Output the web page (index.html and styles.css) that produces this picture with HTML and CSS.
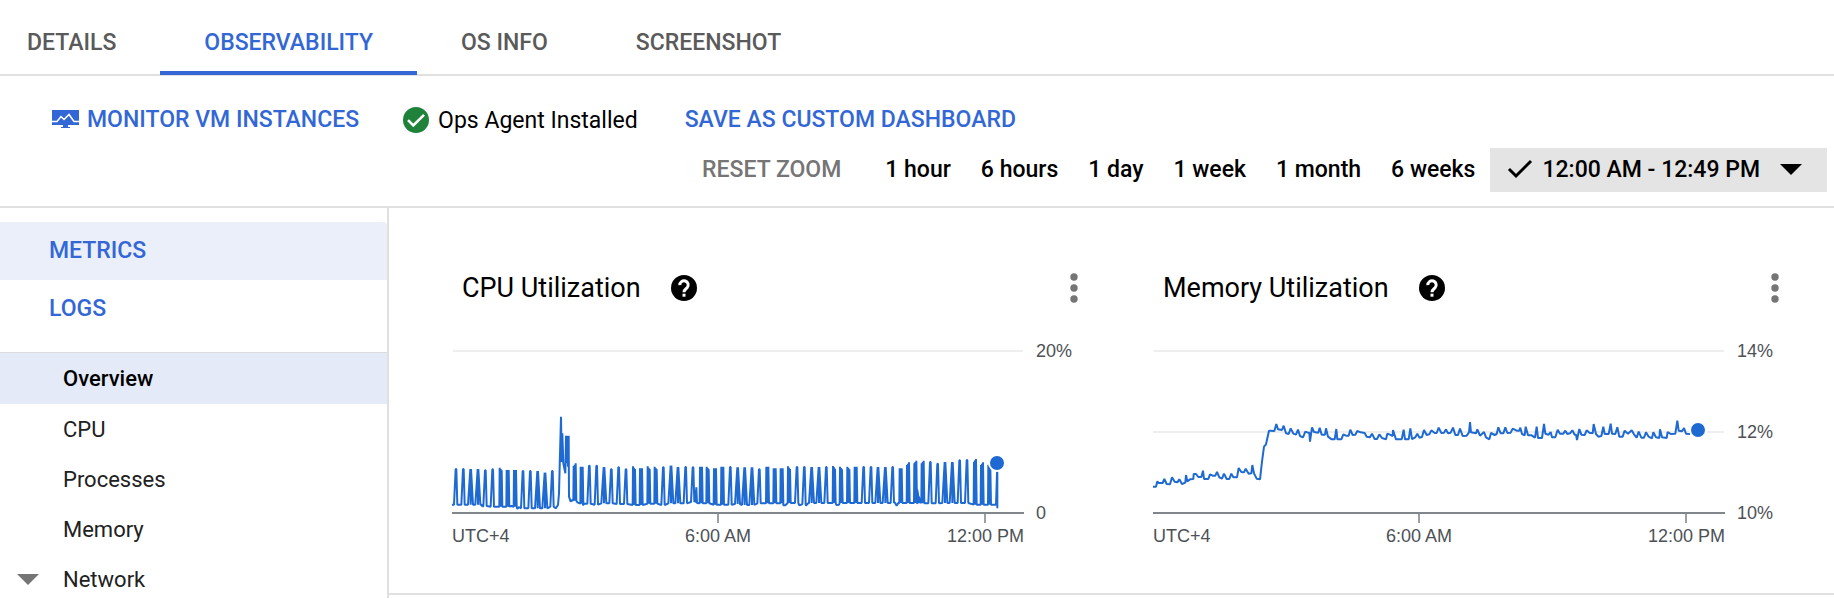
FILE: index.html
```html
<!DOCTYPE html>
<html lang="en">
<head>
<meta charset="utf-8">
<title>VM instance observability</title>
<link rel="stylesheet" href="styles.css">
</head>
<body>
<nav class="tabs">
  <a class="tab" href="#details">DETAILS</a>
  <a class="tab tab-active" href="#observability" aria-current="page">OBSERVABILITY</a>
  <a class="tab" href="#os-info">OS INFO</a>
  <a class="tab" href="#screenshot">SCREENSHOT</a>
</nav>

<header class="toolbar">
  <div class="actions">
    <a class="action" href="#monitor">
      <svg class="icon-monitor" viewBox="0 0 27 18" aria-hidden="true">
        <path fill="#3367d6" d="M0 0h27v15H16v2h2v1H9v-1h2v-2H0z"/>
        <path fill="none" stroke="#fff" stroke-width="1.5" d="M0 11.5h5l4-5 3 3 5-5 5 7h5"/>
      </svg>
      MONITOR VM INSTANCES
    </a>
    <span class="agent">
      <svg class="icon-ok" viewBox="0 0 26 26" aria-hidden="true">
        <circle cx="13" cy="13" r="13" fill="#1e823b"/>
        <path fill="none" stroke="#fff" stroke-width="2.6" d="M5 13.2l5.3 5.3L21 7.8"/>
      </svg>
      Ops Agent Installed
    </span>
    <a class="action save" href="#save">SAVE AS CUSTOM DASHBOARD</a>
  </div>
  <div class="ranges">
    <button class="range reset" type="button" disabled>RESET ZOOM</button>
    <button class="range" type="button">1 hour</button>
    <button class="range" type="button">6 hours</button>
    <button class="range" type="button">1 day</button>
    <button class="range" type="button">1 week</button>
    <button class="range" type="button">1 month</button>
    <button class="range" type="button">6 weeks</button>
    <button class="range range-active" type="button">
      <svg class="icon-check" viewBox="0 0 26 20" aria-hidden="true"><path fill="none" stroke="#000" stroke-width="3" d="M2 10l7 7L24 2"/></svg>
      12:00 AM - 12:49 PM
      <svg class="icon-caret" viewBox="0 0 22 11" aria-hidden="true"><path d="M0 0h22L11 11z"/></svg>
    </button>
  </div>
</header>

<div class="body">
  <aside class="sidebar">
    <nav class="sections">
      <a class="section section-active" href="#metrics">METRICS</a>
      <a class="section" href="#logs">LOGS</a>
    </nav>
    <nav class="tree">
      <a class="item item-active" href="#overview">Overview</a>
      <a class="item" href="#cpu">CPU</a>
      <a class="item" href="#processes">Processes</a>
      <a class="item" href="#memory">Memory</a>
      <a class="item" href="#network"><svg class="item-caret" viewBox="0 0 22 11" aria-hidden="true"><path fill="#757575" d="M0 0h22L11 11z"/></svg>Network</a>
    </nav>
  </aside>

  <main class="main">
    <div class="charts">
      <section class="card">
        <div class="card-head">
          <h2 class="card-title">CPU Utilization</h2>
          <button class="icon-button" type="button" aria-label="Help">
            <svg class="icon-help" viewBox="0 0 26 26" aria-hidden="true"><circle cx="13" cy="13" r="13"/><path fill="none" stroke="#fff" stroke-width="3" d="M8.8 10.2a4.2 4.2 0 1 1 7.3 2.6c-1.4 1.4-3.1 2-3.1 4.4"/><rect x="11.5" y="18.7" width="3" height="3" fill="#fff"/></svg>
          </button>
          <button class="icon-button more" type="button" aria-label="More options">
            <svg class="icon-more" viewBox="0 0 8 30" aria-hidden="true"><g fill="#757575"><circle cx="4" cy="4" r="3.7"/><circle cx="4" cy="15" r="3.7"/><circle cx="4" cy="26" r="3.7"/></g></svg>
          </button>
        </div>
        <svg class="chart" viewBox="0 0 624 216" role="img" aria-label="CPU utilization over time">
          <path class="grid" d="M1 15H571"/>
          <path class="axis" d="M0 177H572"/>
          <path class="tick" d="M266 178V187M533 178V187"/>
          <path class="line" id="cpu-line"/>
          <circle class="dot" cx="545" cy="127" r="8"/>
          <text class="label" x="584" y="21">20%</text>
          <text class="label" x="584" y="183">0</text>
          <text class="label" x="0" y="206">UTC+4</text>
          <text class="label label-mid" x="266" y="206">6:00 AM</text>
          <text class="label label-end" x="572" y="206">12:00 PM</text>
        </svg>
      </section>

      <section class="card">
        <div class="card-head">
          <h2 class="card-title">Memory Utilization</h2>
          <button class="icon-button" type="button" aria-label="Help">
            <svg class="icon-help" viewBox="0 0 26 26" aria-hidden="true"><circle cx="13" cy="13" r="13"/><path fill="none" stroke="#fff" stroke-width="3" d="M8.8 10.2a4.2 4.2 0 1 1 7.3 2.6c-1.4 1.4-3.1 2-3.1 4.4"/><rect x="11.5" y="18.7" width="3" height="3" fill="#fff"/></svg>
          </button>
          <button class="icon-button more" type="button" aria-label="More options">
            <svg class="icon-more" viewBox="0 0 8 30" aria-hidden="true"><g fill="#757575"><circle cx="4" cy="4" r="3.7"/><circle cx="4" cy="15" r="3.7"/><circle cx="4" cy="26" r="3.7"/></g></svg>
          </button>
        </div>
        <svg class="chart" viewBox="0 0 624 216" role="img" aria-label="Memory utilization over time">
          <path class="grid" d="M1 15H571M0 96H571"/>
          <path class="axis" d="M0 177H572"/>
          <path class="tick" d="M266 178V187M533 178V187"/>
          <path class="line" id="memory-line"/>
          <circle class="dot" cx="545" cy="94" r="8"/>
          <text class="label" x="584" y="21">14%</text>
          <text class="label" x="584" y="102">12%</text>
          <text class="label" x="584" y="183">10%</text>
          <text class="label" x="0" y="206">UTC+4</text>
          <text class="label label-mid" x="266" y="206">6:00 AM</text>
          <text class="label label-end" x="572" y="206">12:00 PM</text>
        </svg>
      </section>
    </div>
  </main>
</div>
<script src="charts.js"></script>
</body>
</html>
```

FILE: styles.css
```css
* {
  box-sizing: border-box;
}

body {
  margin: 0;
  background: #fff;
  color: #000;
  font-family: Roboto, "Liberation Sans", sans-serif;
  font-size: 23px;
  overflow: hidden;
}

a {
  color: inherit;
  text-decoration: none;
}

button {
  margin: 0;
  padding: 0;
  border: 0;
  background: none;
  color: inherit;
  font: inherit;
}

svg {
  display: block;
  flex: none;
}

.tabs {
  display: flex;
  height: 76px;
  margin-left: -17px;
  border-bottom: 2px solid #e0e0e0;
  color: #5a5a5a;
  font-weight: 500;
}

.tab {
  height: 75px;
  padding: 9px 44px 0;
  border-bottom: 4px solid transparent;
  line-height: 68px;
}

.tab-active {
  border-color: #3367d6;
  color: #3367d6;
}

.toolbar {
  padding: 22px 7px 14px 52px;
  border-bottom: 2px solid #e0e0e0;
}

.actions {
  display: flex;
  align-items: center;
  height: 44px;
  margin-bottom: 6px;
}

.action {
  display: flex;
  align-items: center;
  gap: 8px;
  padding-bottom: 2px;
  color: #3367d6;
  font-weight: 500;
}

.agent {
  display: flex;
  align-items: center;
  gap: 9px;
  margin: 0 47px 0 44px;
}

.icon-monitor {
  width: 27px;
  height: 18px;
}

.icon-ok,
.icon-help {
  width: 26px;
  height: 26px;
}

.ranges {
  display: flex;
  justify-content: flex-end;
}

.range {
  height: 44px;
  padding: 0 15px 2px;
  font-weight: 500;
  white-space: nowrap;
}

.reset {
  margin-right: 14px;
  color: #757575;
}

.range-active {
  display: flex;
  align-items: center;
  gap: 9px;
  padding: 0 25px 2px 17px;
  background: #e4e4e4;
}

.icon-check {
  width: 26px;
  height: 20px;
}

.icon-caret {
  width: 22px;
  height: 11px;
  margin-left: 11px;
}

.body {
  display: flex;
}

.sidebar {
  flex: none;
  width: 389px;
  padding-top: 14px;
  border-right: 2px solid #e0e0e0;
}

.section {
  display: block;
  padding-left: 49px;
  color: #3367d6;
  font-weight: 500;
  line-height: 58px;
}

.section-active {
  border-top-right-radius: 4px;
  background: #ebeffa;
}

.tree {
  margin-top: 14px;
  border-top: 1px solid #dcdcdc;
  color: #212121;
  font-size: 22px;
}

.item {
  display: flex;
  align-items: center;
  height: 50px;
  padding-left: 63px;
}

.item-active {
  height: 51px;
  background: #e5eaf9;
  color: #000;
  font-weight: 500;
}

.item-caret {
  width: 22px;
  height: 11px;
  margin: 0 24px 0 -46px;
}

.main {
  flex: 1;
}

.charts {
  display: grid;
  grid-template-columns: 1fr 1fr;
  gap: 77px;
  padding: 60px 57px 41px 63px;
  border-bottom: 2px solid #e0e0e0;
}

.card-head {
  display: flex;
  align-items: center;
  height: 40px;
  margin: 0 -2px 28px 0;
  padding-left: 10px;
}

.card-title {
  margin: 0;
  font-size: 27px;
  font-weight: 400;
}

.icon-button {
  margin-left: 30px;
}

.more {
  margin-left: auto;
}

.icon-more {
  width: 8px;
  height: 30px;
}

.chart {
  width: 100%;
  overflow: visible;
}

.grid,
.axis,
.tick,
.line {
  fill: none;
  stroke-width: 2;
}

.grid {
  stroke: #eeeeee;
}

.axis {
  stroke: #80868b;
}

.tick {
  stroke: #9aa0a6;
}

.line {
  stroke: #1f6ad2;
  stroke-linejoin: bevel;
}

.dot {
  fill: #1f6ad2;
  stroke: #fff;
  stroke-width: 2;
}

.label {
  fill: #4d5156;
  font-family: "Liberation Sans", Arial, sans-serif;
  font-size: 18px;
}

.label-mid {
  text-anchor: middle;
}

.label-end {
  text-anchor: end;
}
```

FILE: charts.js
```js
// Samples are stored at three units per chart pixel.
function toPath(points, left) {
  return points.map(function (p, i) {
    var x = (p[0] - left) / 3;
    var y = p[1] / 3 - 76;
    return (i ? 'L' : 'M') + x.toFixed(2) + ' ' + y.toFixed(2);
  }).join('');
}

// Each burst is "x,top,kind": n narrow, w wide, b block, s falling block, r rising block.
function bursts(text, base) {
  var out = [];
  text.split(' ').forEach(function (item) {
    var f = item.split(',');
    var x = +f[0];
    var top = +f[1] + 1;
    if (f[2] === 'n') {
      out.push([x - 6, base], [x - 1, top], [x + 1, top], [x + 4, base]);
    } else if (f[2] === 'w') {
      out.push([x - 8, base], [x - 1, top], [x, base], [x + 1, top], [x + 7, base]);
    } else {
      var a = f[2] === 'r' ? 9 : 1;
      var b = f[2] === 's' ? 9 : 1;
      out.push([x - 4, base], [x - 3, top + a], [x, base], [x, top + (a + b) / 2], [x + 3, base], [x + 3, top + b], [x + 5, base]);
    }
  });
  return out;
}

function pairs(text, shift) {
  return text.split(' ').map(function (item) {
    var f = item.split(',');
    return [+f[0] + shift, +f[1]];
  });
}

var cpu = [[36, 734]].concat(
  bursts('48,626,n 70,626,n 92,626,w 114,626,w', 734),
  pairs('124,734 128,740', 0),
  bursts('136,630,n', 738),
  bursts('158,627,n 182,621,s 203,628,b', 740),
  pairs('214,738', 0),
  bursts('225,628,b', 740),
  pairs('232,747 236,741', 0),
  bursts('249,632,n 271,632,n 293,632,w', 745),
  bursts('315,637,w', 745),
  bursts('337,632,n', 740),
  pairs('347,745 354,735 357,700 359,620 363,470 365,605 368,600 367,520 370,610 376,640 378,527 381,610 382,527 384,620 386,527 387,710 392,725 397,720', 0),
  bursts('404,608,r', 722),
  pairs('412,727', 0),
  bursts('425,618,b', 731),
  pairs('428,736 433,731', 0),
  bursts('448,616,n', 731),
  bursts('470,616,n', 734),
  bursts('492,620,w 514,627,n', 730),
  bursts('536,621,n 558,627,n', 732),
  bursts('582,617,s 603,623,b', 735),
  bursts('626,617,s 647,618,s', 731),
  bursts('670,621,n', 735),
  bursts('693,616,w 714,620,w 737,620,n', 730),
  bursts('759,621,n', 726),
  pairs('765,690 767,728 769,682 771,729', 0),
  bursts('783,618,b 803,618,s', 730),
  bursts('825,623,b 847,618,b 871,620,n', 734),
  bursts('893,621,w', 732),
  bursts('914,621,w 936,621,w', 735),
  bursts('958,627,n 982,618,b 1004,623,b 1025,623,b', 730),
  pairs('1030,736 1036,736', 0),
  bursts('1047,617,s 1071,620,n', 729),
  pairs('1078,736 1086,733', 0),
  bursts('1093,620,n', 733),
  pairs('1098,737 1103,731', 0),
  bursts('1115,620,w 1137,620,w 1159,620,n', 729),
  bursts('1182,616,s', 729),
  pairs('1189,735 1197,734', 0),
  bursts('1203,618,s 1225,618,s 1247,618,b 1271,620,n 1293,620,n 1314,620,w 1336,620,w 1358,620,n', 729),
  pairs('1364,727 1370,737 1375,729', 0),
  bursts('1382,623,b 1404,605,r 1426,600,r', 729),
  pairs('1433,730 1432,690 1438,729 1436,710', 0),
  bursts('1448,600,r 1471,605,n 1493,610,n', 730),
  bursts('1515,605,w 1537,605,w 1559,600,n 1581,599,n', 729),
  bursts('1605,595,r 1626,605,r 1648,612,s', 734),
  pairs('1668,734 1671,640 1672,605 1672,745', 0)
);

var memory = pairs('39,680 48,680 52,664 56,669 68,669 73,657 80,672 90,673 96,652 104,665 112,667 118,658 126,672 136,668 138,645 142,664 150,658 160,657 161,642 168,642 175,651 184,651 189,632 192,657 205,657 210,643 218,647 226,647 231,636 238,652 246,656 252,641 260,657 268,657 274,641 280,652 291,652 296,624 304,636 312,637 317,626 326,641 334,640 337,615 342,640 350,656 360,658 366,605 372,560 378,553 387,512 403,513 409,492 414,508 426,510 431,497 438,520 446,522 452,505 460,521 468,524 474,509 480,528 489,532 496,515 504,518 508,518 510,545 514,516 516,502 522,516 535,518 539,503 545,524 555,524 558,505 564,530 575,538 584,538 589,507 592,538 604,538 610,523 618,527 626,527 631,509 638,525 646,524 652,513 662,517 674,519 680,530 690,532 696,521 704,537 711,537 718,523 726,534 738,538 742,521 750,524 758,528 759,510 768,538 785,538 791,509 795,538 806,538 811,505 816,537 826,532 832,521 838,533 846,531 852,510 860,525 868,523 874,511 884,519 890,519 896,503 904,519 912,518 918,508 924,520 932,518 939,503 946,525 954,525 960,506 968,528 980,527 987,517 990,486 993,517 1008,520 1012,508', 0).concat(
  pairs('0,527 8,520 12,516 18,532 28,538 33,519 44,525 50,522 55,502 62,520 70,520 76,502 82,519 92,518 98,506 110,512 118,512 121,503 126,522 134,526 137,500 144,526 155,526 165,533 170,500 174,534 186,534 192,492 196,521 206,524 212,516 216,532 226,532 233,509 240,521 250,521 256,512 262,522 270,520 277,511 284,524 288,524 291,540 298,507 304,524 314,525 320,511 328,518 338,520 341,492 348,522 355,530 364,528 370,500 374,522 386,522 392,491 396,521 406,522 412,502 418,530 428,530 434,512 444,521 455,511 462,523 470,533 476,515 484,533 492,533 498,517 506,530 516,535 520,517 528,532 538,534 540,508 546,532 560,534 563,516 572,522 586,521 592,482 596,512 606,514 612,504 618,521 630,522', 1020)
);

document.getElementById('cpu-line').setAttribute('d', toPath(cpu, 36));
document.getElementById('memory-line').setAttribute('d', toPath(memory, 39));
```
